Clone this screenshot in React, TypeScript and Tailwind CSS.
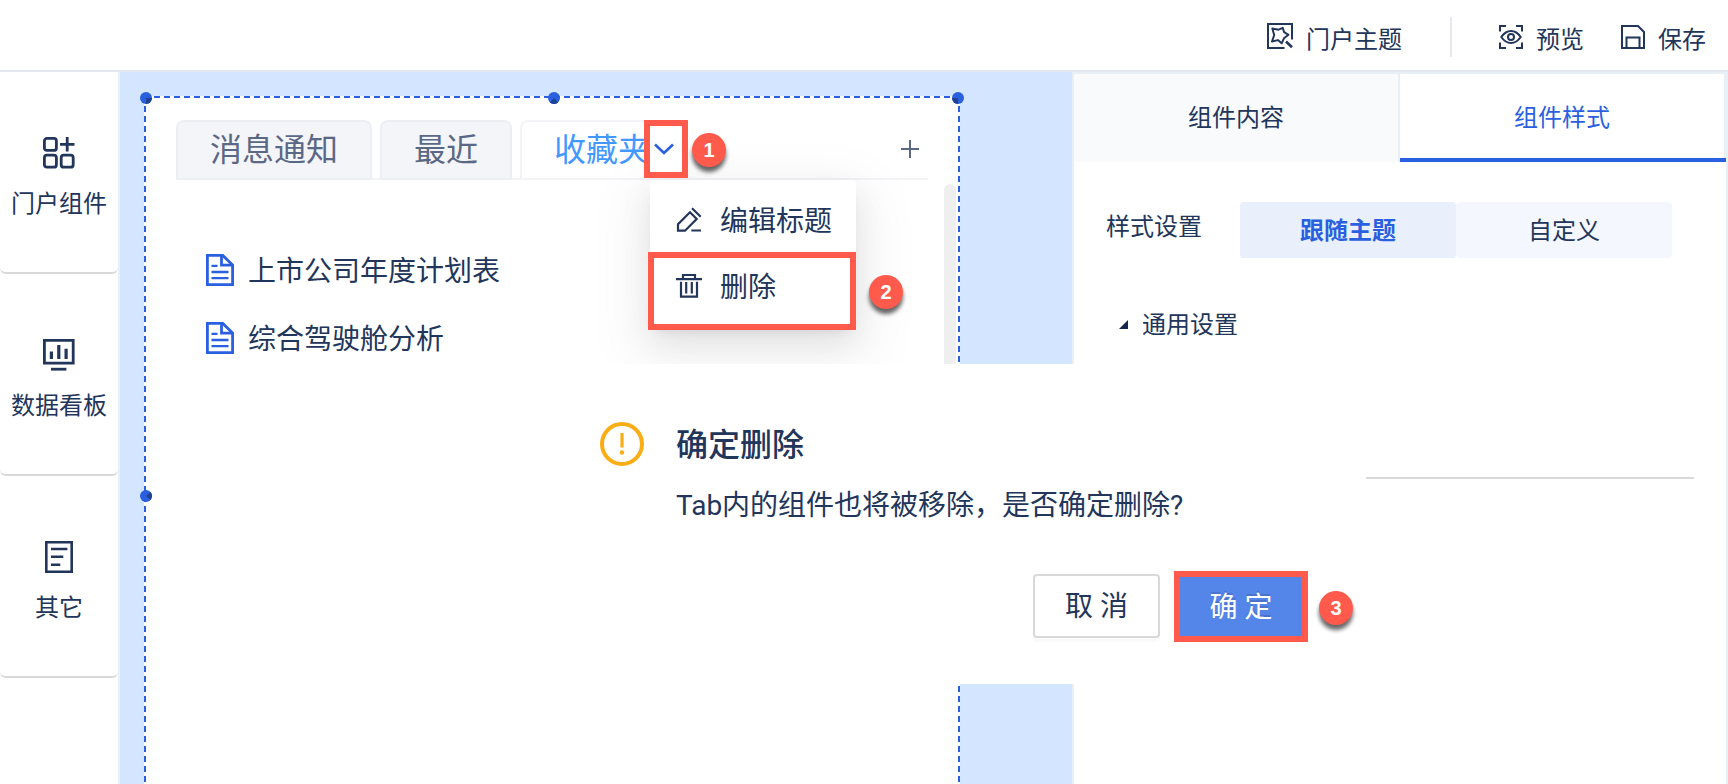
import type { ReactNode } from 'react'

const FONT = "font-['Roboto','Noto_Sans_CJK_SC',sans-serif]"

function ThemeIcon() {
  return (
    <svg width="26" height="26" viewBox="0 0 26 26" fill="none" stroke="currentColor" strokeWidth="2">
      <path d="M25 16.500V1H1v24h16.500" />
      <path d="M5.300 5.500l6.200 1.200 4.200-1.900 1.400 4.300 4.400 2.700-4.600 3.500-2.200 5-3.800-3.200-5.900 1.400 2.200-6.500z" strokeLinejoin="round" />
      <path d="M19 18.500l6 5.800" strokeWidth="2.600" />
    </svg>
  )
}

function PreviewIcon() {
  return (
    <svg width="24" height="24" viewBox="0 0 24 24" fill="none" stroke="currentColor" strokeWidth="2">
      <path d="M1 6.500V1h6M17 1h6v5.500M23 17.500V23h-6M7 23H1v-5.500" />
      <path d="M2.300 12C5 8 8.300 6 12 6s7 2 9.700 6c-2.700 4-6 6-9.700 6s-7-2-9.700-6z" />
      <circle cx="12" cy="12" r="3" />
    </svg>
  )
}

function SaveIcon() {
  return (
    <svg width="24" height="24" viewBox="0 0 24 24" fill="none" stroke="currentColor" strokeWidth="2">
      <path d="M1 1h16l6 6v16H1z" />
      <path d="M5.500 23V12.500h13V23" />
    </svg>
  )
}

function WidgetIcon() {
  return (
    <svg width="32" height="32" viewBox="0 0 32 32" fill="none" stroke="currentColor" strokeWidth="2.800">
      <rect x="1.400" y="1.400" width="12" height="12" rx="2.500" />
      <rect x="1.400" y="18.200" width="12" height="12" rx="2.500" />
      <rect x="18.200" y="18.200" width="12" height="12" rx="2.500" />
      <path d="M24.200 0v14.500M17 7.300h14.500" />
    </svg>
  )
}

function BoardIcon() {
  return (
    <svg width="32" height="32" viewBox="0 0 32 32" fill="none" stroke="currentColor" strokeWidth="2.800">
      <path d="M1.400 1.400h28.800v22.800H1.400z" />
      <path d="M8.400 12.500V20M15.800 6v14M23.100 9.700V20" strokeWidth="3.200" />
      <path d="M8 30.200h15.400" />
    </svg>
  )
}

function OtherIcon() {
  return (
    <svg width="28" height="32" viewBox="0 0 28 32" fill="none" stroke="currentColor" strokeWidth="2.600">
      <path d="M1.300 1.300h25.400v29.400H1.300zM6 8h16.400M6 15.800h12.300M6 23.800h9.300" />
    </svg>
  )
}

function DocIcon() {
  return (
    <svg width="28" height="32" viewBox="0 0 28 32" fill="none" stroke="#2a5fdf" strokeWidth="2.800">
      <path d="M1.400 1.400h15.400l9.800 9.600v19.600H1.400z" />
      <path d="M15.500 1.500v9.700h11" />
      <path d="M5.500 11.800h6M5.500 18h17M5.500 24.200h17" strokeWidth="2.300" />
    </svg>
  )
}

function EditIcon() {
  return (
    <svg width="26" height="26" viewBox="0 0 26 26" fill="none" stroke="currentColor" strokeWidth="2.200">
      <path d="M2 23.700v-6.400l12-12 6.700 6.700L9 23.700z" />
      <path d="M16 1.300l8.700 8.400M15.300 23.500H25" />
    </svg>
  )
}

function TrashIcon() {
  return (
    <svg width="26" height="26" viewBox="0 0 26 26" fill="none" stroke="currentColor" strokeWidth="2.200">
      <path d="M0 6.200h26M7 6V2h12v4M5 8.700v15h16v-15M10.200 9v11.500M15.800 9v11.500" />
    </svg>
  )
}

function Badge({ n, className }: { n: number; className: string }) {
  return (
    <span className={`absolute flex h-[34px] w-[34px] items-center justify-center rounded-full bg-[#ff5a4c] font-['Liberation_Sans',sans-serif] text-[20px] font-bold text-white shadow-[0_5px_4px_rgba(0,0,0,0.6)] ${className}`}>
      {n}
    </span>
  )
}

// 画布选中框的拖拽点
function Handle({ className, dark }: { className: string; dark: string }) {
  return (
    <svg className={`absolute ${className}`} width="12" height="12" viewBox="0 0 12 12">
      <circle cx="6" cy="6" r="6" fill="#2a5fdf" />
      <path d={dark} fill="#1f4294" />
    </svg>
  )
}

function SideItem({ icon, label }: { icon: ReactNode; label: string }) {
  return (
    <div className="flex h-[202px] flex-col items-center rounded-b-[6px] border-b-2 border-[#d9d9d9] pt-[65px]">
      {icon}
      <span className="mt-[17px] text-[24px] leading-[36px]">{label}</span>
    </div>
  )
}

const docs = ['上市公司年度计划表', '综合驾驶舱分析']

export default function App() {
  return (
    <div className={`relative flex h-[784px] w-[1728px] flex-col overflow-hidden bg-white text-[#22355a] ${FONT}`}>
      {/* 顶部栏 */}
      <header className="flex h-[72px] shrink-0 items-start justify-end border-b-2 border-[#e6e8f0] pr-[22px] text-[24px] leading-[36px]">
        <div className="flex gap-[13px] pt-[22px]">
          <div className="pt-[1px]"><ThemeIcon /></div>
          <span>门户主题</span>
        </div>
        <div className="mt-[17px] ml-[48px] h-[40px] w-[2px] bg-[#e6e8f0]" />
        <div className="ml-[47px] flex gap-[13px] pt-[22px]">
          <div className="pt-[3px]"><PreviewIcon /></div>
          <span>预览</span>
        </div>
        <div className="ml-[37px] flex gap-[13px] pt-[22px]">
          <div className="pt-[3px]"><SaveIcon /></div>
          <span>保存</span>
        </div>
      </header>

      <div className="flex min-h-0 flex-1">
        {/* 左侧组件栏 */}
        <aside className="w-[120px] shrink-0 border-r-2 border-[#e9f0f7]">
          <SideItem icon={<WidgetIcon />} label="门户组件" />
          <SideItem icon={<BoardIcon />} label="数据看板" />
          <SideItem icon={<OtherIcon />} label="其它" />
        </aside>

        {/* 画布 */}
        <main className="w-[952px] shrink-0 bg-[#d4e6ff] pt-[24px] pl-[24px]">
          <div className="relative h-[796px] w-[816px] bg-white pt-[24px] pl-[32px]">
            {/* 选中虚线框 */}
            <div className="absolute top-0 left-0 h-[2px] w-full bg-[repeating-linear-gradient(to_right,#2a5fdf_0_6px,transparent_6px_10px)]" />
            <div className="absolute top-0 left-0 h-full w-[2px] bg-[repeating-linear-gradient(to_bottom,#2a5fdf_0_6px,transparent_6px_10px)]" />
            <div className="absolute top-0 right-0 h-full w-[2px] bg-[repeating-linear-gradient(to_bottom,#2a5fdf_0_6px,transparent_6px_10px)]" />
            <Handle className="top-[-4px] left-[-4px]" dark="M6 6h6a6 6 0 0 1-6 6z" />
            <Handle className="top-[-4px] left-[404px]" dark="M6 6l4 4.500a6 6 0 0 1-8 0z" />
            <Handle className="top-[-4px] left-[808px]" dark="M6 6v6a6 6 0 0 1-6-6z" />
            <Handle className="top-[394px] left-[-4px]" dark="M6 6l4.500-4a6 6 0 0 1 0 8z" />

            <div className="flex h-[60px] w-[752px] gap-2 border-b-2 border-[#f3f4f7] text-[32px] leading-[56px]">
              <div className="h-[60px] rounded-t-[8px] border-2 border-[#eceef3] bg-[#f4f5f8] px-[32px] text-[#5b6885]">消息通知</div>
              <div className="h-[60px] rounded-t-[8px] border-2 border-[#eceef3] bg-[#f4f5f8] px-[32px] text-[#5b6885]">最近</div>
              <div className="h-[58px] w-[166px] rounded-t-[8px] border-2 border-b-0 border-[#f3f4f7] pl-[32px] text-[#4398ff]">收藏夹</div>
              <svg className="mt-[20px] mr-[9px] ml-auto" width="18" height="18" viewBox="0 0 18 18" stroke="#5b6885" strokeWidth="2">
                <path d="M9 0v18M0 9h18" />
              </svg>
            </div>

            <ul className="mt-[74px] ml-[30px] flex flex-col gap-[36px]">
              {docs.map(name => (
                <li key={name} className="flex h-[32px] items-center gap-[14px] text-[28px]">
                  <DocIcon />
                  <span className="mt-[2px] -mb-[2px]">{name}</span>
                </li>
              ))}
            </ul>

            {/* 滚动条 */}
            <div className="absolute top-[88px] left-[800px] h-[400px] w-[12px] rounded-full bg-[#efefef]" />

            {/* Tab 下拉菜单 */}
            <div className="absolute top-[84px] left-[506px] h-[150px] w-[206px] rounded-[4px] bg-white text-[28px] leading-[40px] shadow-[0_6px_12px_-8px_rgba(0,0,0,0.12),0_12px_32px_rgba(0,0,0,0.08),0_18px_56px_16px_rgba(0,0,0,0.05)]">
              <div className="flex items-center gap-[18px] pt-[20px] pl-[26px]">
                <EditIcon />
                <span className="mt-[2px] -mb-[2px]">编辑标题</span>
              </div>
              <div className="flex items-center gap-[18px] pt-[26px] pl-[26px]">
                <TrashIcon />
                <span className="mt-[2px] -mb-[2px]">删除</span>
              </div>
            </div>

            {/* 标注 */}
            <div className="absolute top-[24px] left-[500px] flex h-[58px] w-[44px] justify-center border-6 border-[#ff5a4c] bg-white pt-[17px] pr-[4px]">
              <svg className="shrink-0" width="20" height="12" viewBox="0 0 20 12" fill="none" stroke="#2a5fdf" strokeWidth="2.600">
                <path d="M1 1.500l9 8.500 9-8.500" />
              </svg>
            </div>
            <Badge n={1} className="top-[37px] left-[548px]" />
            <div className="absolute top-[156px] left-[504px] h-[78px] w-[208px] border-6 border-[#ff5a4c]" />
            <Badge n={2} className="top-[179px] left-[725px]" />
          </div>
        </main>

        {/* 右侧设置面板 */}
        <section className="flex-1 border-2 border-b-0 border-[#e9f0f5] text-[24px] leading-[36px]">
          <div className="flex h-[88px] text-center leading-[88px]">
            <div className="w-[326px] border-r-2 border-[#e9f0f5] bg-[#f9fafc]">组件内容</div>
            <div className="relative w-[326px] border-r-2 border-[#e9f0f5] text-[#2a5fdf]">
              组件样式
              <div className="absolute bottom-0 left-0 h-[4px] w-[326px] bg-[#2a5fdf]" />
            </div>
          </div>
          <div className="mt-[40px] ml-[32px] flex">
            <span className="w-[134px] pt-[7px]">样式设置</span>
            <div className="flex h-[56px] w-[432px] text-center leading-[58px]">
              <div className="flex-1 rounded-[4px] bg-[#e9effb] font-bold text-[#2a5fdf]">跟随主题</div>
              <div className="flex-1 rounded-[4px] bg-[#f4f7fe]">自定义</div>
            </div>
          </div>
          <div className="mt-[49px] ml-[45px] flex items-center gap-[14px]">
            <svg className="-mt-[2px]" width="9" height="9" viewBox="0 0 9 9" fill="#14284f"><path d="M9 0v9H0z" /></svg>
            通用设置
          </div>
          <div className="mt-[134px] mr-[32px] ml-[200px] h-[2px] bg-[#d9d9d9]" />
        </section>
      </div>

      {/* 删除确认弹窗 */}
      <div className="absolute top-[364px] left-[534px] h-[320px] w-[832px] bg-white pt-[58px] pl-[66px]">
        <div className="flex gap-[32px]">
          <svg width="44" height="44" viewBox="0 0 44 44" fill="none" stroke="#faad14" strokeWidth="4">
            <circle cx="22" cy="22" r="20" />
            <path d="M22 11v14.500" strokeWidth="3.200" />
            <circle cx="22" cy="30.500" r="2.200" fill="#faad14" stroke="none" />
          </svg>
          <div>
            <div className="pt-[1px] text-[32px] leading-[44px] font-medium">确定删除</div>
            <div className="mt-[19px] text-[28px] leading-[40px]">Tab内的组件也将被移除，是否确定删除?</div>
          </div>
        </div>
        <div className="mt-[45px] ml-[433px] flex text-[28px]">
          <button className="mt-[3px] h-[64px] w-[127px] rounded-[4px] border-2 border-[#d9d9d9] pt-[2px] shadow-[0_4px_0_rgba(0,0,0,0.02)]">取 消</button>
          <button className="ml-[14px] h-[71px] w-[134px] border-6 border-[#ff5a4c] bg-[#5485e8] pt-[2px] text-white [text-shadow:0_-2px_0_rgba(0,0,0,0.12)]">确 定</button>
        </div>
        <Badge n={3} className="top-[227px] left-[785px]" />
      </div>
    </div>
  )
}
